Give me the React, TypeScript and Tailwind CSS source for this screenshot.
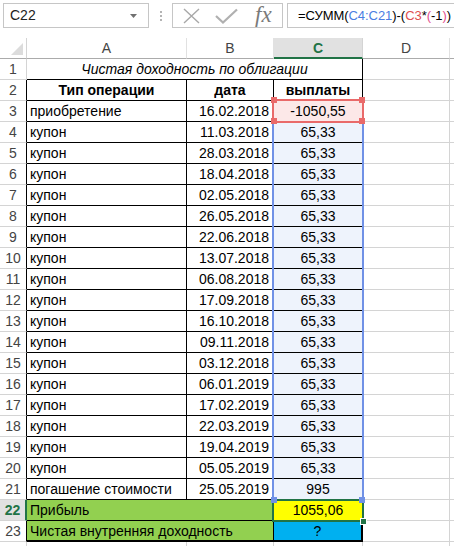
import type { ReactNode } from 'react';

type Row = { n: number; a: string; b: string; c: string };

const couponDates = [
  '11.03.2018',
  '28.03.2018',
  '18.04.2018',
  '02.05.2018',
  '26.05.2018',
  '22.06.2018',
  '13.07.2018',
  '06.08.2018',
  '17.09.2018',
  '16.10.2018',
  '09.11.2018',
  '03.12.2018',
  '06.01.2019',
  '17.02.2019',
  '22.03.2019',
  '19.04.2019',
  '05.05.2019',
];

const rows: Row[] = [
  { n: 3, a: 'приобретение', b: '16.02.2018', c: '-1050,55' },
  ...couponDates.map((b, i) => ({ n: i + 4, a: 'купон', b, c: '65,33' })),
  { n: 21, a: 'погашение стоимости', b: '25.05.2019', c: '995' },
];

function Cell({ className, children }: { className: string; children?: ReactNode }) {
  return (
    <div className={`h-[21px] flex items-center pt-px overflow-hidden whitespace-nowrap ${className}`}>
      {children}
    </div>
  );
}

function Toolbar() {
  return (
    <div className="h-[38px] flex items-start pt-[3px] pl-[3px]">
      <div className="w-[146px] h-[25px] border border-[#c6c6c6] flex items-center justify-between pl-[6px] pr-[11px] text-[14px] text-[#222]">
        <span>C22</span>
        <svg width="7" height="4" viewBox="0 0 7 4">
          <polygon points="0,0 7,0 3.5,4" fill="#707070" />
        </svg>
      </div>
      <div className="w-[23px] h-[25px] flex flex-col items-center justify-center gap-[2px]">
        <span className="w-[2px] h-[2px] bg-[#b4b4b4]" />
        <span className="w-[2px] h-[2px] bg-[#b4b4b4]" />
        <span className="w-[2px] h-[2px] bg-[#b4b4b4]" />
      </div>
      <div className="w-[111px] h-[25px] border border-[#c6c6c6] flex items-center pl-[10px] gap-[15px]">
        <svg width="17" height="16" viewBox="0 0 17 16">
          <path d="M1 1 L16 15 M16 1 L1 15" stroke="#a8a8a8" strokeWidth="1.4" fill="none" />
        </svg>
        <svg width="23" height="16" viewBox="0 0 23 16">
          <path d="M1 8 L8 14.5 L22 1.5" stroke="#b0b0b0" strokeWidth="2.2" fill="none" />
        </svg>
        <span className="font-['Liberation_Serif',serif] italic text-[23px] leading-none text-[#7a7a7a] -mt-[3px] ml-[2px]">
          fx
        </span>
      </div>
      <div className="ml-[4px] flex-1 h-[25px] border border-r-0 border-[#c6c6c6] flex items-center pl-[10px] text-[13px] tracking-[-0.05px] text-black whitespace-nowrap overflow-hidden">
        <span>=СУММ(</span>
        <span className="text-[#4a7de2]">C4:C21</span>
        <span>)-(</span>
        <span className="text-[#e0504f]">C3</span>
        <span>*</span>
        <span className="text-[#e2508f]">(</span>
        <span>-1</span>
        <span className="text-[#e2508f]">)</span>
        <span>)</span>
      </div>
    </div>
  );
}

function Sheet() {
  return (
    <div className="relative grid grid-cols-[27px_160px_87px_89px_87px_1fr] text-[14px]">
      {/* column headers */}
      <div className="h-[21px] border-r border-b border-r-[#d4d4d4] border-b-[#ababab] relative">
        <svg className="absolute left-0 top-0" width="26" height="20" viewBox="0 0 26 20">
          <polygon points="23,5 23,17 11,17" fill="#dcdcdc" />
        </svg>
      </div>
      <Cell className="justify-center border-r border-b border-r-[#e1e1e1] border-b-[#ababab] text-[#444]">A</Cell>
      <Cell className="justify-center border-r border-b border-r-[#e1e1e1] border-b-[#ababab] text-[#444]">B</Cell>
      <Cell className="justify-center border-r border-b-2 border-r-[#d4d4d4] border-b-[#217346] bg-[#e1e1e1] text-[#217346] font-bold">
        C
      </Cell>
      <Cell className="justify-center border-r border-b border-r-[#e1e1e1] border-b-[#ababab] text-[#444]">D</Cell>
      <Cell className="border-b border-b-[#ababab]" />

      {/* row 1 */}
      <Cell className="justify-center border-r border-b border-[#d4d4d4] text-[#444]">1</Cell>
      <Cell className="col-span-3 justify-center border-r border-b border-black italic">
        Чистая доходность по облигации
      </Cell>
      <Cell className="border-r border-b border-[#d4d4d4]" />
      <Cell className="border-b border-[#d4d4d4]" />

      {/* row 2 */}
      <Cell className="justify-center border-r border-b border-r-black border-b-[#d4d4d4] text-[#444]">2</Cell>
      <Cell className="justify-center border-r border-b border-black font-bold">Тип операции</Cell>
      <Cell className="justify-center border-r border-b border-black font-bold">дата</Cell>
      <Cell className="justify-center border-r border-b border-black font-bold">выплаты</Cell>
      <Cell className="border-r border-b border-[#d4d4d4]" />
      <Cell className="border-b border-[#d4d4d4]" />

      {rows.map((r) => (
        <div key={r.n} className="contents">
          <Cell className="justify-center border-r border-b border-r-black border-b-[#d4d4d4] text-[#444]">{r.n}</Cell>
          <Cell className="pl-[3px] border-r border-b border-black">{r.a}</Cell>
          <Cell className="justify-end pr-[4px] border-r border-b border-black">{r.b}</Cell>
          <Cell
            className={
              r.n === 3
                ? 'justify-center border-r border-b border-black bg-[#fce8e8]'
                : 'justify-center border-r border-b border-black bg-[#eef3fc]'
            }
          >
            {r.c}
          </Cell>
          <Cell className="border-r border-b border-[#d4d4d4]" />
          <Cell className="border-b border-[#d4d4d4]" />
        </div>
      ))}

      {/* row 22 */}
      <Cell className="justify-center border-r-2 border-b border-r-[#217346] border-b-[#d4d4d4] bg-[#e1e1e1] text-[#217346] font-bold">
        22
      </Cell>
      <Cell className="col-span-2 pl-[3px] border-r border-b border-black bg-[#92d050]">Прибыль</Cell>
      <Cell className="justify-center border-r border-b border-black bg-[#ffff00]">1055,06</Cell>
      <Cell className="border-r border-b border-[#d4d4d4]" />
      <Cell className="border-b border-[#d4d4d4]" />

      {/* row 23 */}
      <Cell className="justify-center border-r border-b border-r-black border-b-[#d4d4d4] text-[#444]">23</Cell>
      <Cell className="col-span-2 pl-[3px] border-r border-b-2 border-black bg-[#92d050]">
        Чистая внутренняя доходность
      </Cell>
      <Cell className="justify-center border-r-2 border-b-2 border-black bg-[#00b0f0]">?</Cell>
      <Cell className="border-r border-b border-[#d4d4d4]" />
      <Cell className="border-b border-[#d4d4d4]" />

      {/* row 24, only its top edge is visible */}
      <Cell className="border-r border-b border-[#d4d4d4]" />
      <Cell className="border-r border-b border-[#d4d4d4]" />
      <Cell className="border-r border-b border-[#d4d4d4]" />
      <Cell className="border-r border-b border-[#d4d4d4]" />
      <Cell className="border-r border-b border-[#d4d4d4]" />
      <Cell className="border-b border-[#d4d4d4]" />

      {/* reference highlight C4:C21 */}
      <div className="pointer-events-none absolute left-[272px] top-[83px] w-[92px] h-[380px] border-2 border-[#7091e6]" />
      {/* reference highlight C3 */}
      <div className="pointer-events-none absolute left-[272px] top-[61px] w-[92px] h-[24px] border-2 border-[#e96a6a]" />
      <div className="absolute left-[271px] top-[59px] w-[6px] h-[6px] bg-[#e96a6a]" />
      <div className="absolute left-[359px] top-[59px] w-[6px] h-[6px] bg-[#e96a6a]" />
      <div className="absolute left-[271px] top-[80px] w-[6px] h-[6px] bg-[#e96a6a]" />
      <div className="absolute left-[359px] top-[80px] w-[6px] h-[6px] bg-[#e96a6a]" />
      {/* active cell C22 */}
      <div className="pointer-events-none absolute left-[272px] top-[461px] w-[92px] h-[23px] border-2 border-[#217346]" />
      <div className="absolute left-[271px] top-[459px] w-[6px] h-[6px] bg-[#7091e6]" />
      <div className="absolute left-[359px] top-[459px] w-[6px] h-[6px] bg-[#7091e6]" />
      <div className="absolute left-[360px] top-[480px] w-[7px] h-[7px] bg-[#217346] border border-white" />
    </div>
  );
}

export default function App() {
  return (
    <div className="w-[454px] h-[546px] overflow-hidden bg-white text-black font-['Liberation_Sans',Arial,sans-serif]">
      <Toolbar />
      <Sheet />
    </div>
  );
}
